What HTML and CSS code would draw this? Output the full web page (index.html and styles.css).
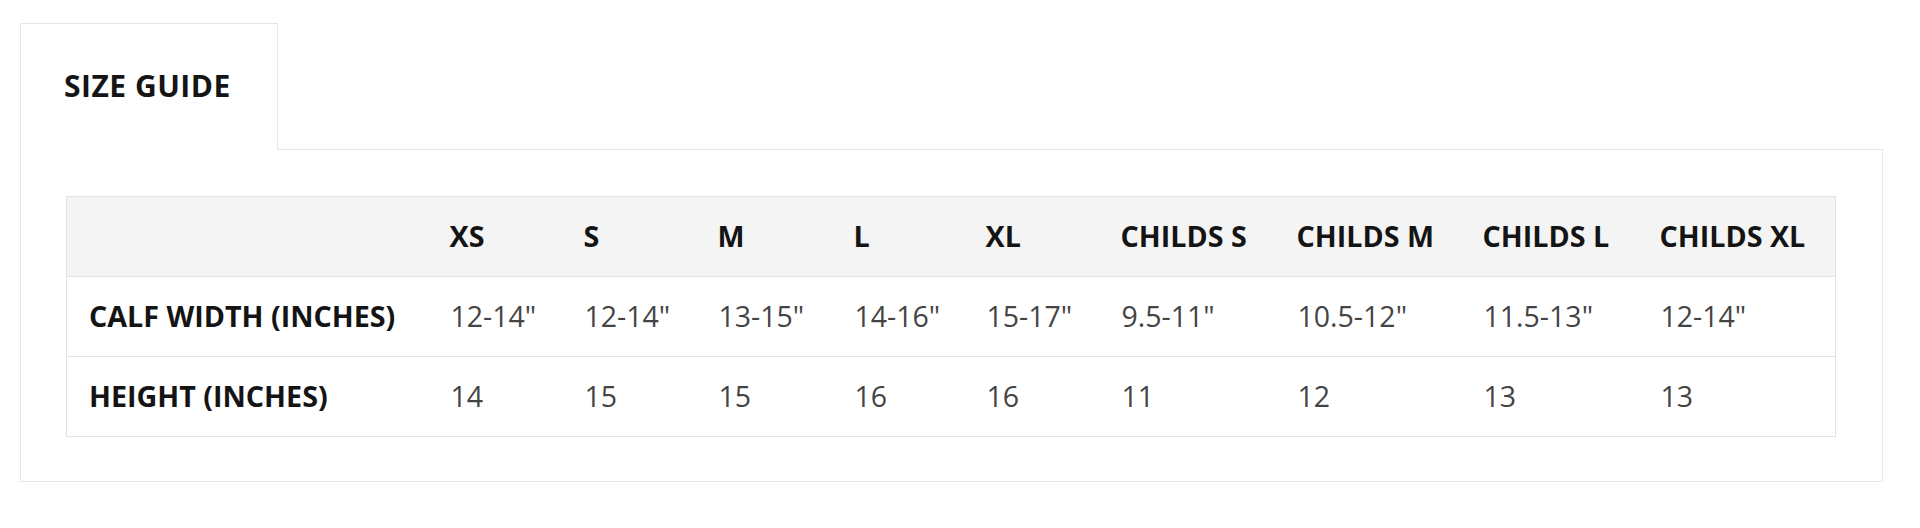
FILE: index.html
```html
<!DOCTYPE html>
<html lang="en">
<head>
<meta charset="utf-8">
<title>Size Guide</title>
<link rel="stylesheet" href="styles.css">
</head>
<body>
<div class="page">
  <div class="tabs">
    <div class="tab">SIZE GUIDE</div>
  </div>
  <div class="panel">
    <table class="sizes">
      <colgroup>
        <col class="c-label">
        <col class="c-s">
        <col class="c-s">
        <col class="c-m">
        <col class="c-l">
        <col class="c-xl">
        <col class="c-cs">
        <col class="c-cm">
        <col class="c-cl">
        <col class="c-cxl">
      </colgroup>
      <thead>
        <tr>
          <th></th>
          <th>XS</th>
          <th>S</th>
          <th>M</th>
          <th>L</th>
          <th>XL</th>
          <th>CHILDS S</th>
          <th>CHILDS M</th>
          <th>CHILDS L</th>
          <th>CHILDS XL</th>
        </tr>
      </thead>
      <tbody>
        <tr>
          <th>CALF WIDTH (INCHES)</th>
          <td>12-14"</td>
          <td>12-14"</td>
          <td>13-15"</td>
          <td>14-16"</td>
          <td>15-17"</td>
          <td>9.5-11"</td>
          <td>10.5-12"</td>
          <td>11.5-13"</td>
          <td>12-14"</td>
        </tr>
        <tr>
          <th>HEIGHT (INCHES)</th>
          <td>14</td>
          <td>15</td>
          <td>15</td>
          <td>16</td>
          <td>16</td>
          <td>11</td>
          <td>12</td>
          <td>13</td>
          <td>13</td>
        </tr>
      </tbody>
    </table>
  </div>
</div>
</body>
</html>
```

FILE: styles.css
```css
html, body {
  margin: 0;
  padding: 0;
  background: #ffffff;
}

body {
  font-family: "Open Sans", "Liberation Sans", sans-serif;
  color: #222;
}

.page {
  padding: 23px 37px 0 20px;
}

.tabs {
  display: flex;
}

.tab {
  position: relative;
  z-index: 1;
  box-sizing: border-box;
  width: 258px;
  height: 127px;
  margin-bottom: -1px;
  padding: 0 0 4px 43px;
  display: flex;
  align-items: center;
  background: #fff;
  border: 1px solid #e6e6e6;
  border-bottom: none;
  font-size: 30px;
  font-weight: 700;
  color: #151515;
  letter-spacing: 0.5px;
}

.panel {
  box-sizing: border-box;
  width: 1863px;
  border: 1px solid #e6e6e6;
  padding: 46px 46px 44px 45px;
}

.sizes {
  table-layout: fixed;
  width: 1770px;
  border-collapse: collapse;
  border: 1px solid #e3e3e3;
}

.c-label { width: 361px; }
.c-s { width: 134px; }
.c-m { width: 136px; }
.c-l { width: 132px; }
.c-xl { width: 135px; }
.c-cs { width: 176px; }
.c-cm { width: 186px; }
.c-cl { width: 177px; }
.c-cxl { width: 198px; }

.sizes tr {
  height: 80px;
}

.sizes thead tr {
  background: #f4f4f4;
}

.sizes tbody tr {
  border-top: 1px solid #e3e3e3;
}

.sizes th,
.sizes td {
  padding: 0 0 2px 22px;
  text-align: left;
  vertical-align: middle;
  line-height: 38px;
  white-space: nowrap;
}

.sizes th {
  font-size: 28.7px;
  font-weight: 700;
  color: #141414;
}

.sizes td {
  padding-left: 23px;
  font-size: 28.5px;
  font-weight: 400;
  color: #444;
}
```
